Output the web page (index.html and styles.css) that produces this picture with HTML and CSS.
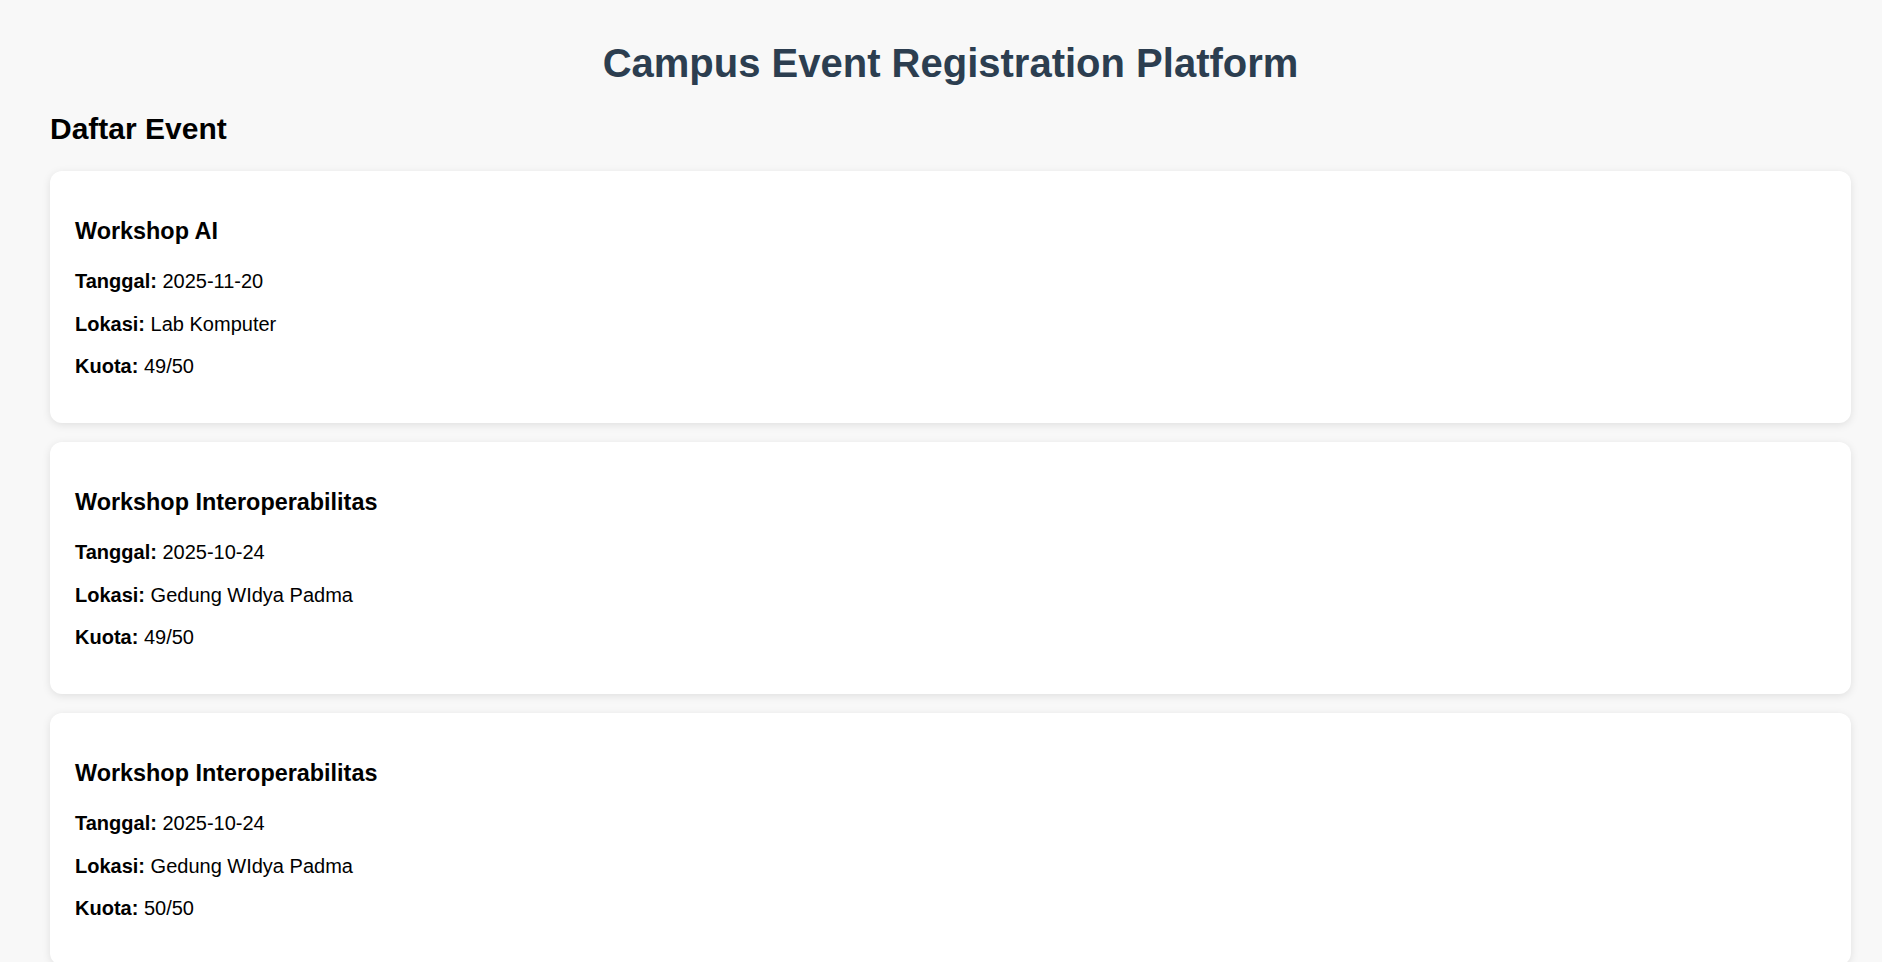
FILE: index.html
```html
<!DOCTYPE html>
<html lang="id">
<head>
<meta charset="utf-8">
<title>Campus Event Registration Platform</title>
<link rel="stylesheet" href="styles.css">
</head>
<body>
<div class="page">
  <h1 class="page-title">Campus Event Registration Platform</h1>
  <h2 class="section-title">Daftar Event</h2>
  <div class="event-list">
    <div class="event-card">
      <h3 class="event-name">Workshop AI</h3>
      <p class="event-info"><strong>Tanggal:</strong> 2025-11-20</p>
      <p class="event-info"><strong>Lokasi:</strong> Lab Komputer</p>
      <p class="event-info"><strong>Kuota:</strong> 49/50</p>
    </div>
    <div class="event-card">
      <h3 class="event-name">Workshop Interoperabilitas</h3>
      <p class="event-info"><strong>Tanggal:</strong> 2025-10-24</p>
      <p class="event-info"><strong>Lokasi:</strong> Gedung WIdya Padma</p>
      <p class="event-info"><strong>Kuota:</strong> 49/50</p>
    </div>
    <div class="event-card">
      <h3 class="event-name">Workshop Interoperabilitas</h3>
      <p class="event-info"><strong>Tanggal:</strong> 2025-10-24</p>
      <p class="event-info"><strong>Lokasi:</strong> Gedung WIdya Padma</p>
      <p class="event-info"><strong>Kuota:</strong> 50/50</p>
    </div>
  </div>
</div>
</body>
</html>
```

FILE: styles.css
```css
html, body {
  margin: 0;
  padding: 0;
}

body {
  background: #f8f8f8;
  font-family: "Liberation Sans", Arial, sans-serif;
  color: #000;
}

.page {
  padding: 40px 31px 40px 50px;
}

.page-title {
  margin: 0;
  font-size: 40px;
  line-height: 46px;
  font-weight: 700;
  color: #2c3e50;
  text-align: center;
}

.section-title {
  margin: 25px 0 25px;
  font-size: 30px;
  line-height: 35px;
  font-weight: 700;
}

.event-list {
  display: flex;
  flex-direction: column;
  gap: 19px;
}

.event-card {
  background: #fff;
  border-radius: 12px;
  box-shadow: 0 2px 8px rgba(0, 0, 0, 0.1);
  padding: 24px 24px 25.5px 25px;
}

.event-name {
  margin: 23px 0 26px;
  font-size: 23.4px;
  line-height: 26px;
  font-weight: 700;
}

.event-info {
  margin: 19.5px 0;
  font-size: 20px;
  line-height: 23px;
}

.event-info strong {
  font-weight: 700;
}
```
